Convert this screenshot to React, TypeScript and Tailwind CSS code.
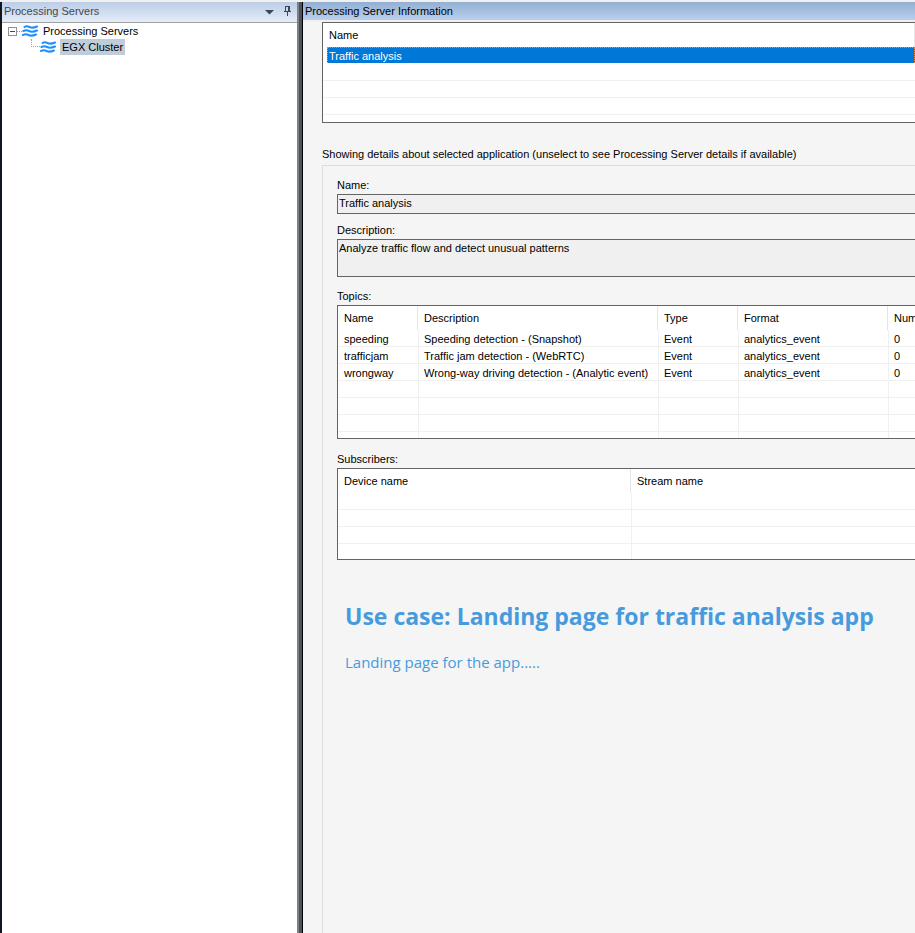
import type { ReactNode } from "react";

function Waves() {
  return (
    <svg width="16" height="12" viewBox="0 0 16 12" fill="none" stroke="#1e90ff" strokeWidth="2.1" strokeLinecap="round" className="shrink-0" aria-hidden="true">
      <path d="M2.500 2C4 1 5.500 1 7.500 2 9.500 3 12 2.800 15 1.500" />
      <path d="M1.500 6C3.500 5 5 5 7 6 9 7 12 6.800 15 5.500" />
      <path d="M1 10C3 9 4.500 9 6.500 10 8.500 11 11 10.800 14 9.500" />
    </svg>
  );
}

type GridProps = { label: string; columns: { title: string; width?: string }[]; rows: string[][]; blank: number; height: string };

function Grid({ label, columns, rows, blank, height }: GridProps) {
  const all = [...rows, ...Array.from({ length: blank }, () => columns.map(() => ""))];
  return (
    <div className={`overflow-hidden border border-r-0 border-[#646464] bg-white ${height}`}>
      <table aria-label={label} className="w-full table-fixed border-separate border-spacing-0">
        <thead>
          <tr className="h-6">
            {columns.map((c, i) => (
              <th key={c.title} scope="col" className={`${c.width ?? ""} p-0 text-left font-normal whitespace-nowrap ${i < columns.length - 1 ? "border-r border-[#e5e5e5]" : ""}`}>
                <span className="pl-1.5">{c.title}</span>
              </th>
            ))}
          </tr>
        </thead>
        <tbody>
          {all.map((r, n) => (
            <tr key={n} className="h-[17px]">
              {r.map((v, i) => (
                <td key={i} className={`border-b border-[#f0f0f0] p-0 whitespace-nowrap ${i > 0 ? "border-l pl-[5px]" : "pl-1.5"}`}>
                  <span className="block h-4 leading-[18px]">{v}</span>
                </td>
              ))}
            </tr>
          ))}
        </tbody>
      </table>
    </div>
  );
}

function Title({ children }: { children: ReactNode }) {
  return <h2 className="grow leading-[18px]">{children}</h2>;
}

export default function App() {
  return (
    <div className="flex min-h-screen overflow-hidden border-t-2 border-[#f0f0f0] bg-[#f5f5f5] font-['Liberation_Sans',Arial,sans-serif] text-[11px] leading-4 text-black">
      <aside className="flex w-[297px] shrink-0 flex-col border-l-2 border-[#10161e] bg-white">
        <header className="flex h-[21px] items-start border-b border-[#a0a0a0] bg-linear-to-b from-[#bccde6] to-[#e4ecf8] pr-0.5 pl-0.5 text-[#44484e]">
          <Title>Processing Servers</Title>
          <button aria-label="Window position" className="flex h-5 w-5 items-center justify-center">
            <svg width="9" height="5" viewBox="0 0 9 5" fill="#3c4654"><path d="M0 0h9L4.500 4.500z" /></svg>
          </button>
          <button aria-label="Auto hide" className="flex h-[18px] w-4 items-center justify-center">
            <svg width="9" height="10" viewBox="0 0 9 10" fill="#3c4654"><path d="M2 0h5v5h1v1H5v4H4V6H1V5h1zM3 1v4h2V1z" fillRule="evenodd" /></svg>
          </button>
        </header>
        <ul className="pl-1.5">
          <li>
            <div className="flex h-4 items-center">
              <button aria-label="Collapse" className="flex size-[9px] items-center justify-center border border-[#919191] bg-white">
                <span className="h-px w-[5px] bg-[#2c4a9c]" />
              </button>
              <span className="w-[5px] border-t border-dotted border-[#a0a0a0]" />
              <Waves />
              <span className="ml-1 px-px">Processing Servers</span>
            </div>
            <ul>
              <li className="flex h-4 items-center pl-[23px]">
                <span className="mb-2 h-2 w-[9px] border-b border-l border-dotted border-[#a0a0a0]" />
                <Waves />
                <span className="ml-1 bg-[#bfcddb] px-0.5">EGX Cluster</span>
              </li>
            </ul>
          </li>
        </ul>
      </aside>
      <div className="w-1.5 shrink-0 border-r border-l-2 border-r-black border-l-[#808080] bg-[#4a545e]" />
      <main className="flex min-w-0 grow flex-col">
        <header className="flex h-[18px] items-center bg-linear-to-b from-[#93afd1] to-[#b9d0ee] pl-0.5">
          <Title>Processing Server Information</Title>
        </header>
        <div className="h-0.5 bg-[#f0f0f0]" />
        <div className="flex grow flex-col pl-[19px]">
          <div className="h-[101px] overflow-hidden border border-r-0 border-[#646464] bg-white">
            <table aria-label="Applications" className="w-full border-separate border-spacing-0">
              <thead>
                <tr className="h-6"><th scope="col" className="border-r border-[#e5e5e5] p-0 pl-1.5 text-left font-normal">Name</th></tr>
              </thead>
              <tbody>
                <tr className="h-[17px]"><td className="p-0 pl-1 align-top"><span className="block h-4 border border-b-0 border-dotted border-[#ff8728] bg-[#0078d7] pl-px leading-4 text-white">Traffic analysis</span></td></tr>
                <tr className="h-[17px]"><td className="border-b border-[#f0f0f0] p-0" /></tr>
                <tr className="h-[17px]"><td className="border-b border-[#f0f0f0] p-0" /></tr>
                <tr className="h-[17px]"><td className="border-b border-[#f0f0f0] p-0" /></tr>
              </tbody>
            </table>
          </div>
          <p className="mt-[23px] whitespace-nowrap">Showing details about selected application (unselect to see Processing Server details if available)</p>
          <section className="mt-[3px] grow border-t border-l border-[#dcdcdc] pt-[11px] pl-3.5">
            <label htmlFor="name" className="block">Name:</label>
            <input id="name" readOnly value="Traffic analysis" className="mt-px block h-5 w-full border border-r-0 border-[#646464] bg-[#f0f0f0] px-px pb-0.5 outline-none" />
            <label htmlFor="description" className="mt-2 block">Description:</label>
            <textarea id="description" readOnly value="Analyze traffic flow and detect unusual patterns" className="mt-px block h-[38px] w-full resize-none overflow-hidden border border-r-0 border-[#646464] bg-[#f0f0f0] px-px outline-none" />
            <h3 className="mt-[11px] mb-px">Topics:</h3>
            <Grid
              label="Topics"
              height="h-[134px]"
              blank={4}
              columns={[{ title: "Name", width: "w-20" }, { title: "Description", width: "w-60" }, { title: "Type", width: "w-20" }, { title: "Format", width: "w-[150px]" }, { title: "Num" }]}
              rows={[
                ["speeding", "Speeding detection - (Snapshot)", "Event", "analytics_event", "0"],
                ["trafficjam", "Traffic jam detection - (WebRTC)", "Event", "analytics_event", "0"],
                ["wrongway", "Wrong-way driving detection - (Analytic event)", "Event", "analytics_event", "0"],
              ]}
            />
            <h3 className="mt-3 mb-px">Subscribers:</h3>
            <Grid label="Subscribers" height="h-[92px]" blank={4} columns={[{ title: "Device name", width: "w-[293px]" }, { title: "Stream name" }]} rows={[]} />
            <article className="mt-10 pl-2 font-['Open_Sans','Noto_Sans',sans-serif] whitespace-nowrap text-[#479bdd]">
              <h1 className="text-[23px] leading-8 font-bold">Use case: Landing page for traffic analysis app</h1>
              <p className="mt-[18px] text-[15px] leading-6">Landing page for the app.....</p>
            </article>
          </section>
        </div>
      </main>
    </div>
  );
}
